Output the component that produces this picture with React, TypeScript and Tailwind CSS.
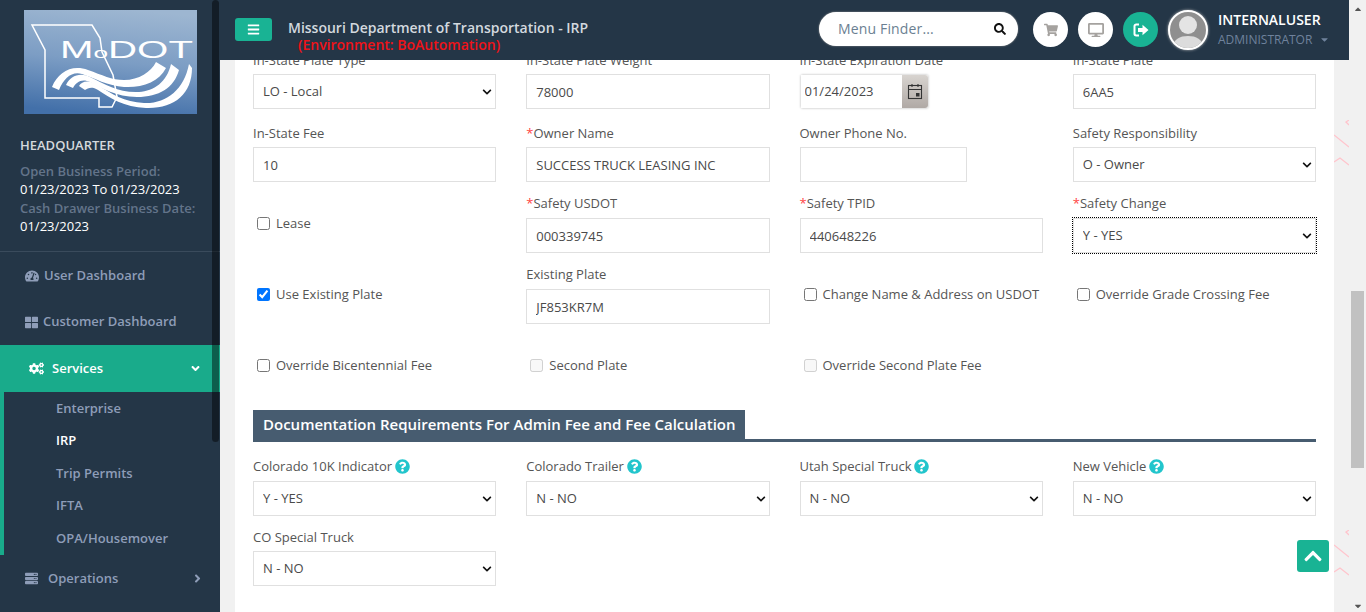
import type { ReactNode } from "react";
import {
  FaAngleDown,
  FaAngleRight,
  FaBars,
  FaCaretDown,
  FaCaretUp,
  FaChevronDown,
  FaChevronUp,
  FaCogs,
  FaDesktop,
  FaQuestionCircle,
  FaSearch,
  FaServer,
  FaShoppingCart,
  FaTachometerAlt,
  FaThLarge,
} from "react-icons/fa";

const fieldClass = "h-[35px] w-full border border-[#e0e0e0] bg-white text-[13px] text-[#4a4a4a]";
const rowClass = "grid grid-cols-4 gap-x-[30px]";
// these rows sit a pixel lower in the reference, label stays put
const looseRow = "[&>div>div:first-child]:mb-px";

function Label({ text, required, help }: { text: string; required?: boolean; help?: boolean }) {
  return (
    <div className="flex h-[21px] items-start gap-[3px] text-[13px] leading-[15px] text-[#555]">
      <span>
        {required && <span className="text-[#f44]">*</span>}
        {text}
      </span>
      {help && <FaQuestionCircle className="text-[#22c5cc]" size={15} />}
    </div>
  );
}

function TextField({ label, value, required, narrow }: { label: string; value: string; required?: boolean; narrow?: boolean }) {
  return (
    <div className="flex flex-col">
      <Label text={label} required={required} />
      <input readOnly value={value} className={`${fieldClass} px-[9px] outline-none ${narrow ? "!w-[167px]" : ""}`} />
    </div>
  );
}

function SelectField({ label, value, required, help, focused }: { label: string; value: string; required?: boolean; help?: boolean; focused?: boolean }) {
  return (
    <div className="flex flex-col">
      <Label text={label} required={required} help={help} />
      <div className="relative">
        <select
          value={value}
          onChange={() => {}}
          className={`${fieldClass} appearance-none px-[9px] ${focused ? "outline-1 outline-dotted outline-black" : "outline-none"}`}
        >
          <option>{value}</option>
        </select>
        <FaChevronDown className="pointer-events-none absolute right-[4px] top-[13px] text-[#111]" size={10} />
      </div>
    </div>
  );
}

function Check({ label, checked, disabled }: { label: string; checked?: boolean; disabled?: boolean }) {
  return (
    <label className="flex h-[35px] items-center gap-[6px] pl-[4px] text-[13px] text-[#555]">
      <input type="checkbox" readOnly checked={!!checked} disabled={disabled} className="h-[13px] w-[13px]" />
      <span>{label}</span>
    </label>
  );
}

function Logo() {
  return (
    <svg viewBox="0 0 173 104" className="h-[104px] w-[173px]">
      <defs>
        <linearGradient id="logoBg" x1="0.6" y1="0" x2="0.45" y2="1">
          <stop offset="0" stopColor="#9db6d1" />
          <stop offset="0.5" stopColor="#7c9dc4" />
          <stop offset="1" stopColor="#4370a9" />
        </linearGradient>
      </defs>
      <rect width="173" height="104" fill="url(#logoBg)" />
      <path
        d="M8 15 H68 L76 28 L78 42 L89 65 L93 87 L88 97 H75 V88 H21 V40 L8 15 Z"
        fill="none"
        stroke="#fff"
        strokeWidth="1.5"
      />
      <text x="36" y="48" fill="#fff" fontFamily="Liberation Sans, sans-serif" fontSize="23" textLength="133" lengthAdjust="spacingAndGlyphs">
        M<tspan fontSize="15">o</tspan>DOT
      </text>
      <path d="M28 77 C34 62 48 54 64 60 C78 65 88 70 100 70 C115 70 127 62 132 52 L142 58 C135 72 118 78 100 77 C84 76 70 68 58 64 C48 61 40 68 35 80 Z" fill="#fff" />
      <path d="M42 75 C46 66 56 62 66 67 C82 75 95 83 115 82 C130 81 143 72 147 54 L155 60 C150 78 135 87 113 87 C92 87 78 78 66 72 C58 68 52 72 49 78 Z" fill="#fff" />
      <path d="M55 76 C58 71 64 70 72 74 C88 84 100 92 120 93 C142 94 160 80 165 54 L168 58 C168 84 150 99 122 98 C100 97 86 88 74 80 C68 76 64 78 61 80 Z" fill="#fff" />
    </svg>
  );
}

function NavItem({ icon, label, arrow, gap }: { icon: ReactNode; label: string; arrow?: boolean; gap: string }) {
  return (
    <div className={`flex h-[46px] items-center ${gap} pl-[25px] pr-[16px] pt-px text-[13px] font-semibold text-[#8e9db8]`}>
      {icon}
      <span>{label}</span>
      {arrow && <FaAngleRight className="ml-auto" size={13} />}
    </div>
  );
}

function Sidebar() {
  return (
    <aside className="relative flex h-full w-[220px] shrink-0 flex-col overflow-hidden bg-[#243647]">
      <div className="flex flex-col pl-[24px] pt-[10px]">
        <Logo />
      </div>
      <div className="px-[20px] pt-[22px] text-[13px] leading-[18.5px]">
        <div className="font-semibold text-[#d5d9dd]">HEADQUARTER</div>
        <div className="mt-[7px] font-semibold text-[#63748a]">Open Business Period:</div>
        <div className="text-white">01/23/2023 To 01/23/2023</div>
        <div className="font-semibold text-[#63748a]">Cash Drawer Business Date:</div>
        <div className="text-white">01/23/2023</div>
      </div>
      <div className="mt-[15px] h-px bg-[#3a4b5c]" />
      <div className="pt-[1px]">
        <NavItem icon={<FaTachometerAlt size={14} />} label="User Dashboard" gap="gap-[5px]" />
        <NavItem icon={<FaThLarge size={13} />} label="Customer Dashboard" gap="gap-[5px]" />
      </div>
      <div className="flex h-[47px] items-center gap-[8px] bg-[#19ab8b] pl-[29px] pr-[18px] pt-px text-[13px] font-semibold text-white">
        <FaCogs size={15} />
        <span>Services</span>
        <FaAngleDown className="ml-auto" size={13} />
      </div>
      <div className="border-l-4 border-[#19ab8b] pl-[52px] pt-[0.5px] text-[13px] font-semibold text-[#8e9db8]">
        <div className="flex h-[32.6px] items-center">Enterprise</div>
        <div className="flex h-[32.6px] items-center text-white">IRP</div>
        <div className="flex h-[32.6px] items-center">Trip Permits</div>
        <div className="flex h-[32.6px] items-center">IFTA</div>
        <div className="flex h-[32.6px] items-center">OPA/Housemover</div>
      </div>
      <NavItem icon={<FaServer size={13} />} label="Operations" arrow gap="gap-[10px]" />
      <div className="absolute right-[1px] top-0 h-[442px] w-[7px] rounded-[4px] bg-[#000]/45" />
    </aside>
  );
}

function RoundIcon({ children, green }: { children: ReactNode; green?: boolean }) {
  return (
    <div className={`flex h-[35px] w-[35px] items-center justify-center rounded-full ${green ? "bg-[#19b394] text-white" : "bg-white text-[#a5a29f]"}`}>
      {children}
    </div>
  );
}

function Header() {
  return (
    <header className="relative z-10 flex h-[60px] shrink-0 bg-[#243647] pl-[15px]">
      <button className="mt-[18px] flex h-[23px] w-[37px] items-center justify-center rounded-[3px] bg-[#19b394] text-white">
        <FaBars size={13} />
      </button>
      <div className="ml-[16px] flex flex-col pt-[19px] text-[14px] font-semibold leading-[17px]">
        <span className="text-[#d3d9df]">Missouri Department of Transportation - IRP</span>
        <span className="pl-[10px] text-[#f01218]">(Environment: BoAutomation)</span>
      </div>
      <div className="ml-auto flex w-[530px] items-start pt-[12px]">
        <div className="flex h-[34px] w-[199px] items-center rounded-full bg-white pl-[19px] pr-[12px] shadow-[0_0_2px_#999]">
          <span className="pb-[1px] text-[14px] tracking-[0.15px] text-[#6b7f92]">Menu Finder...</span>
          <FaSearch className="ml-auto text-[#111]" size={12} />
        </div>
        <div className="ml-[15px] flex items-center gap-[10px]">
          <RoundIcon>
            <FaShoppingCart size={14} />
          </RoundIcon>
          <RoundIcon>
            <FaDesktop size={16} />
          </RoundIcon>
          <RoundIcon green>
            <svg viewBox="0 0 16 14" className="h-[14px] w-[16px]">
              <path d="M6 1.5H3.2A1.7 1.7 0 0 0 1.5 3.2v7.6a1.7 1.7 0 0 0 1.7 1.7H6" fill="none" stroke="#fff" strokeWidth="2" />
              <path d="M5 5h4.5V1.8L15.5 7l-6 5.2V9H5Z" fill="#fff" />
            </svg>
          </RoundIcon>
        </div>
        <div className="-mt-[2px] ml-[10px] h-[40px] w-[40px] overflow-hidden rounded-full border-2 border-white bg-[#8f8f8f] shadow-[0_0_3px_#bbb]">
          <svg viewBox="0 0 36 36" className="h-full w-full">
            <circle cx="18" cy="13" r="9" fill="#e4e4e4" />
            <path d="M3 36 C3 27 10 24 18 24 C26 24 33 27 33 36 Z" fill="#dcdcdc" />
          </svg>
        </div>
        <div className="-mt-[2px] ml-[10px] leading-[19px]">
          <div className="text-[14px] font-semibold text-white">INTERNALUSER</div>
          <div className="mt-px flex items-center gap-[7px] text-[12px] text-[#6f829c]">
            ADMINISTRATOR <FaCaretDown size={11} />
          </div>
        </div>
      </div>
    </header>
  );
}

function CalendarIcon() {
  return (
    <svg viewBox="0 0 16 17" className="h-[17px] w-[16px]" fill="none" stroke="#333" strokeWidth="1.1">
      <rect x="1.5" y="2.5" width="13" height="13" />
      <path d="M1.5 6.5h13M5 1v3M11 1v3" />
      <rect x="9" y="10" width="3.5" height="3.5" fill="#333" stroke="none" />
    </svg>
  );
}

function Form() {
  return (
    <div className="-mt-[7px] flex w-[1099px] shrink-0 flex-col bg-white px-[18px] pb-[20px]">
      <div className={rowClass}>
        <SelectField label="In-State Plate Type" value="LO - Local" />
        <TextField label="In-State Plate Weight" value="78000" />
        <div className="flex flex-col">
          <Label text="In-State Expiration Date" />
          <div className="flex h-[35px] w-[129px] rounded-[3px] border border-[#e4e4e4] shadow-[0_0_2px_#ddd]">
            <input readOnly value="01/24/2023" className="w-[101px] bg-white pl-[4px] pt-px text-[13px] text-[#4a4a4a] outline-none" />
            <div className="flex w-[27px] items-center justify-center rounded-r-[3px] bg-gradient-to-b from-[#d8d4d0] to-[#b0a9a5]">
              <CalendarIcon />
            </div>
          </div>
        </div>
        <TextField label="In-State Plate" value="6AA5" />
      </div>
      <div className={`mt-[17px] ${rowClass}`}>
        <TextField label="In-State Fee" value="10" />
        <TextField label="Owner Name" value="SUCCESS TRUCK LEASING INC" required />
        <TextField label="Owner Phone No." value="" narrow />
        <SelectField label="Safety Responsibility" value="O - Owner" />
      </div>
      <div className={`mt-[14px] ${rowClass} ${looseRow}`}>
        <div className="flex items-end pb-[12px]">
          <Check label="Lease" />
        </div>
        <TextField label="Safety USDOT" value="000339745" required />
        <TextField label="Safety TPID" value="440648226" required />
        <SelectField label="Safety Change" value="Y - YES" required focused />
      </div>
      <div className={`mt-[14px] ${rowClass} ${looseRow}`}>
        <div className="flex items-end pb-[12px]">
          <Check label="Use Existing Plate" checked />
        </div>
        <TextField label="Existing Plate" value="JF853KR7M" />
        <div className="flex items-end pb-[12px]">
          <Check label="Change Name & Address on USDOT" />
        </div>
        <div className="flex items-end pb-[12px]">
          <Check label="Override Grade Crossing Fee" />
        </div>
      </div>
      <div className={`mt-[24px] ${rowClass}`}>
        <Check label="Override Bicentennial Fee" />
        <Check label="Second Plate" disabled />
        <Check label="Override Second Plate Fee" disabled />
      </div>
      <div className="mt-[27px] border-b-[3px] border-[#475c70]">
        <div className="flex h-[29px] w-fit items-center bg-[#475c70] pl-[10px] pr-[9px] text-[15px] font-semibold text-white">
          Documentation Requirements For Admin Fee and Fee Calculation
        </div>
      </div>
      <div className={`mt-[17px] ${rowClass} ${looseRow}`}>
        <SelectField label="Colorado 10K Indicator" value="Y - YES" help />
        <SelectField label="Colorado Trailer" value="N - NO" help />
        <SelectField label="Utah Special Truck" value="N - NO" help />
        <SelectField label="New Vehicle" value="N - NO" help />
      </div>
      <div className={`mt-[14px] ${rowClass}`}>
        <SelectField label="CO Special Truck" value="N - NO" />
      </div>
    </div>
  );
}

function PinkMarks({ className }: { className: string }) {
  return (
    <svg viewBox="0 0 15 50" className={`absolute left-[1099px] h-[50px] w-[15px] ${className}`} fill="none" stroke="#ffc4cc" strokeWidth="1.3">
      <path d="M15 0 L12 2 L15 5" />
      <path d="M0 15 L15 27" />
      <path d="M0 42 L6 38 L15 45" />
    </svg>
  );
}

export default function App() {
  return (
    <div className="flex h-[612px] w-[1366px] overflow-hidden bg-[#f1f1f1] font-['Open_Sans',sans-serif]">
      <Sidebar />
      <div className="flex min-w-0 flex-1 flex-col">
        <Header />
        <div className="relative flex min-h-0 flex-1 overflow-hidden pl-[15px]">
          <Form />
          <PinkMarks className="top-[60px] ml-[15px]" />
          <PinkMarks className="top-[470px] ml-[15px]" />
          <button className="absolute right-[20px] top-[480px] flex h-[32px] w-[32px] items-center justify-center rounded-[3px] bg-[#19b394] text-white">
            <FaChevronUp size={20} />
          </button>
        </div>
      </div>
      <div className="relative flex h-full w-[17px] shrink-0 flex-col items-center bg-[#f1f1f1]">
        <FaCaretUp className="mt-[4px] text-[#555]" size={10} />
        <div className="absolute left-[2px] top-[291px] h-[177px] w-[13px] bg-[#c1c1c1]" />
        <FaCaretDown className="absolute bottom-[1px] text-[#555]" size={10} />
      </div>
    </div>
  );
}
